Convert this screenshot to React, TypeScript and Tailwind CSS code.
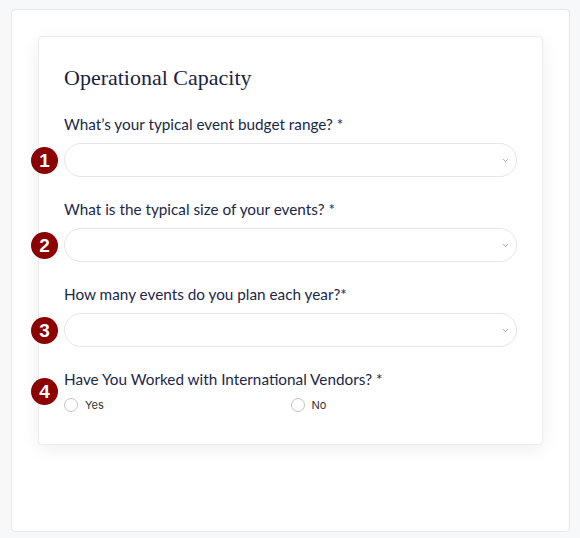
import { ChevronDown } from "lucide-react";

const QUESTIONS = [
  "What’s your typical event budget range? *",
  "What is the typical size of your events? *",
  "How many events do you plan each year?*",
];

function Badge({ n }: { n: number }) {
  return (
    <span className="absolute left-[-33px] flex h-[27px] w-[27px] items-center justify-center rounded-full bg-[#8b0000] font-['Liberation_Sans',sans-serif] text-[19px] font-bold leading-none text-white">
      {n}
    </span>
  );
}

function SelectField({ label, n }: { label: string; n: number }) {
  return (
    <div className="mb-[22px]">
      <label className="mb-[9px] block text-[15.3px] leading-[20px] text-[#1c2747]">{label}</label>
      <div className="relative flex items-center">
        <Badge n={n} />
        <div className="flex h-[34px] w-full items-center justify-end rounded-full border border-[#e6e6e6] bg-white pr-[6px]">
          <ChevronDown className="h-[9px] w-[9px] text-[#888]" strokeWidth={2} />
        </div>
      </div>
    </div>
  );
}

function Radio({ label }: { label: string }) {
  return (
    <label className="flex items-center gap-[7px]">
      <span className="h-[14px] w-[14px] rounded-full border border-[#c4c4c4] bg-white" />
      <span className="font-['Inter',sans-serif] text-[11px] text-[#333]">{label}</span>
    </label>
  );
}

export default function App() {
  return (
    <div className="min-h-[538px] bg-[#f7f8fa] pl-[11px] pr-[10px] pt-[9px] pb-[6px] font-['Lato',sans-serif]">
      <div className="h-[523px] rounded-[4px] border border-[#e8e9ec] bg-white pl-[26px] pr-[26px] pt-[26px]">
        <div className="rounded-[4px] border border-[#ececec] bg-white pb-[30px] pl-[25px] pr-[25px] pt-[27px] shadow-[0_4px_18px_rgba(0,0,0,0.07)]">
          <h2 className="mb-[22px] font-['Liberation_Serif',serif] text-[22px] leading-[28px] text-[#1a2340]">
            Operational Capacity
          </h2>

          {QUESTIONS.map((q, idx) => (
            <SelectField key={q} label={q} n={idx + 1} />
          ))}

          <div>
            <label className="mb-[8px] block text-[15.3px] leading-[20px] text-[#1c2747]">
              Have You Worked with International Vendors? *
            </label>
            <div className="relative grid grid-cols-2">
              <span className="absolute top-[-19px] left-[-33px] flex h-[27px] w-[27px] items-center justify-center rounded-full bg-[#8b0000] font-['Liberation_Sans',sans-serif] text-[19px] font-bold leading-none text-white">
                4
              </span>
              <Radio label="Yes" />
              <Radio label="No" />
            </div>
          </div>
        </div>
      </div>
    </div>
  );
}
